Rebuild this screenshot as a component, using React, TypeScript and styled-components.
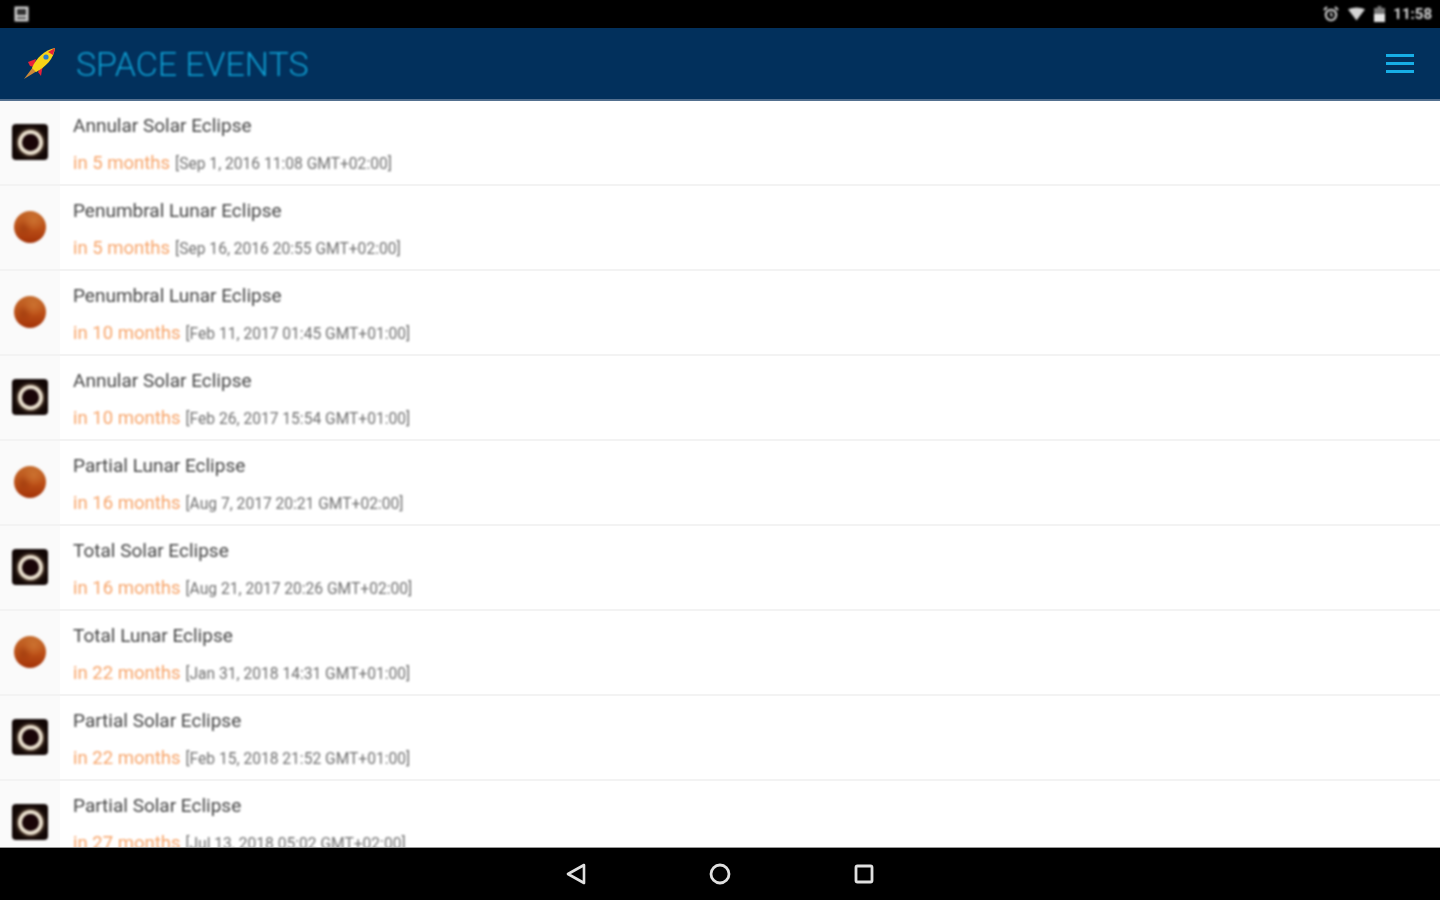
import React from "react";
import styled, { createGlobalStyle } from "styled-components";

const Global = createGlobalStyle`
  html, body { margin: 0; padding: 0; height: 100%; background: #fff; overflow: hidden; }
  body { font-family: "Roboto", "Liberation Sans", sans-serif; }
  #root { height: 100%; }
`;

const Page = styled.div`
  width: 1440px;
  height: 900px;
  display: flex;
  flex-direction: column;
  overflow: hidden;
`;
const StatusBar = styled.div`
  height: 28px;
  flex: none;
  background: #000;
  display: flex;
  align-items: center;
  justify-content: space-between;
  padding: 0 8px 0 14px;
`;
const StatusLeft = styled.div`
  filter: blur(0.8px);
`;
const StatusRight = styled.div`
  display: flex;
  align-items: center;
  filter: blur(0.8px);
`;
const Clock = styled.span`
  color: #d8d8d8;
  font-size: 15px;
  font-weight: 700;
  margin-left: 8px;
`;
const Header = styled.header`
  height: 73px;
  flex: none;
  box-sizing: border-box;
  background: #02305c;
  border-bottom: 2px solid #54708f;
  display: flex;
  align-items: center;
  padding: 0 26px 0 22px;
`;
const Title = styled.h1`
  margin: 0 0 0 18px;
  flex: 1;
  color: #0f9ccf;
  font-size: 34px;
  line-height: 40px;
  font-weight: 300;
  letter-spacing: -0.05px;
  filter: blur(0.8px);
`;
const Menu = styled.div`
  width: 28px;
  display: flex;
  flex-direction: column;
  gap: 5px;
  filter: blur(0.5px);
`;
const MenuBar = styled.span`
  height: 3px;
  background: #17aee6;
`;
const List = styled.main`
  flex: 1;
  min-height: 0;
  overflow: hidden;
  background: #fff;
`;
const Row = styled.div`
  height: 85px;
  box-sizing: border-box;
  display: flex;
  border-bottom: 2px solid #f3f3f3;
`;
const IconCell = styled.div`
  width: 60px;
  flex: none;
  box-sizing: border-box;
  padding-bottom: 1px;
  background: #fafafa;
  display: flex;
  align-items: center;
  justify-content: center;
`;
const Body = styled.div`
  flex: 1;
  padding: 13px 0 0 13px;
  filter: blur(0.8px);
`;
const Name = styled.div`
  color: #444;
  font-size: 19px;
  line-height: 24px;
`;
const Meta = styled.div`
  margin-top: 14px;
  display: flex;
  align-items: baseline;
  gap: 5px;
  white-space: nowrap;
`;
const When = styled.span`
  color: #f7a469;
  font-size: 18.5px;
  line-height: 22px;
`;
const DateText = styled.span`
  color: #6f6f6f;
  font-size: 15.6px;
  line-height: 22px;
`;
const NavBar = styled.nav`
  height: 53px;
  flex: none;
  background: #000;
  border-top: 1px solid #999;
  box-sizing: border-box;
  display: flex;
  align-items: center;
  justify-content: center;
`;
const NavIcons = styled.div`
  display: flex;
  align-items: center;
  gap: 120px;
  filter: blur(0.7px);
`;
const NavSlot = styled.svg`
  width: 24px;
  height: 24px;
  display: block;
`;
const Glyph = styled.svg`
  display: block;
  flex: none;
`;
const SolarBox = styled.div`
  width: 36px;
  height: 36px;
  border-radius: 4px;
  background: #130806;
  display: flex;
  align-items: center;
  justify-content: center;
  filter: blur(0.8px);
`;
const SolarRing = styled.div`
  width: 25px;
  height: 25px;
  box-sizing: border-box;
  border-radius: 50%;
  background: #1a0508;
  border: 4px solid #e6dccb;
  box-shadow: 0 0 4px #a8886a;
`;
const Moon = styled.div`
  width: 32px;
  height: 32px;
  border-radius: 50%;
  background:
    radial-gradient(circle at 62% 30%, rgba(214, 130, 60, 0.55) 0, rgba(214, 130, 60, 0) 35%),
    radial-gradient(circle at 30% 55%, rgba(130, 40, 5, 0.35) 0, rgba(130, 40, 5, 0) 30%),
    linear-gradient(180deg, #c4692a 0%, #bb4f17 55%, #a33208 100%);
  filter: blur(0.8px);
`;

const events = [
  ["s", "Annular Solar Eclipse", "in 5 months", "[Sep 1, 2016 11:08 GMT+02:00]"],
  ["l", "Penumbral Lunar Eclipse", "in 5 months", "[Sep 16, 2016 20:55 GMT+02:00]"],
  ["l", "Penumbral Lunar Eclipse", "in 10 months", "[Feb 11, 2017 01:45 GMT+01:00]"],
  ["s", "Annular Solar Eclipse", "in 10 months", "[Feb 26, 2017 15:54 GMT+01:00]"],
  ["l", "Partial Lunar Eclipse", "in 16 months", "[Aug 7, 2017 20:21 GMT+02:00]"],
  ["s", "Total Solar Eclipse", "in 16 months", "[Aug 21, 2017 20:26 GMT+02:00]"],
  ["l", "Total Lunar Eclipse", "in 22 months", "[Jan 31, 2018 14:31 GMT+01:00]"],
  ["s", "Partial Solar Eclipse", "in 22 months", "[Feb 15, 2018 21:52 GMT+01:00]"],
  ["s", "Partial Solar Eclipse", "in 27 months", "[Jul 13, 2018 05:02 GMT+02:00]"],
];

const Rocket = () => (
  <Glyph width="36" height="36" viewBox="0 0 36 36" style={{ filter: "blur(0.6px)" }}>
    <path d="M2 33 L11 21 L15 25 Z" fill="#c9893a" />
    <path d="M6 16 L14 13 L12 21 L8 20 Z" fill="#e8203a" />
    <path d="M20 24 L22 17 L16 26 L19 30 Z" fill="#e8203a" />
    <path d="M10 22 C14 12 23 4 33 2 C32 12 24 21 14 26 Z" fill="#f7d417" />
    <path d="M26 6 L33 2 L31 9 Z" fill="#e8203a" />
    <circle cx="24" cy="11" r="2.6" fill="#2a7fd0" />
  </Glyph>
);

export default function App() {
  return (
    <>
      <Global />
      <Page>
        <StatusBar>
          <StatusLeft>
            <Glyph width="15" height="16" viewBox="0 0 15 16">
              <rect x="0.5" y="0.5" width="14" height="15" fill="#cfcfcf" />
              <rect x="3" y="3" width="9" height="6" fill="#333" />
              <rect x="3" y="11" width="9" height="2" fill="#555" />
            </Glyph>
          </StatusLeft>
          <StatusRight>
            <Glyph width="16" height="16" viewBox="0 0 16 16" fill="none" stroke="#d4d4d4">
              <circle cx="8" cy="9" r="5.2" strokeWidth="2" />
              <path d="M8 6v3.5h2" strokeWidth="1.4" />
              <path d="M1 4l3-3M15 4l-3-3" strokeWidth="2" />
            </Glyph>
            <Glyph width="17" height="14" viewBox="0 0 18 14" style={{ marginLeft: 9 }}>
              <path d="M0 2 Q9 -2 18 2 L9 14 Z" fill="#d4d4d4" />
            </Glyph>
            <Glyph width="11" height="16" viewBox="0 0 11 16" style={{ marginLeft: 9 }}>
              <rect x="3.5" y="0" width="4" height="2" fill="#777" />
              <rect x="0" y="2" width="11" height="14" fill="#777" />
              <rect x="0" y="8" width="11" height="8" fill="#e6e6e6" />
            </Glyph>
            <Clock>11:58</Clock>
          </StatusRight>
        </StatusBar>
        <Header>
          <Rocket />
          <Title>SPACE EVENTS</Title>
          <Menu>
            <MenuBar />
            <MenuBar />
            <MenuBar />
          </Menu>
        </Header>
        <List>
          {events.map(([kind, name, when, date], i) => (
            <Row key={i}>
              <IconCell>
                {kind === "s" ? (
                  <SolarBox>
                    <SolarRing />
                  </SolarBox>
                ) : (
                  <Moon />
                )}
              </IconCell>
              <Body>
                <Name>{name}</Name>
                <Meta>
                  <When>{when}</When>
                  <DateText>{date}</DateText>
                </Meta>
              </Body>
            </Row>
          ))}
        </List>
        <NavBar>
          <NavIcons>
            <NavSlot viewBox="0 0 24 24" fill="none" stroke="#e0e0e0" strokeWidth="2.6">
              <path d="M20 3 L4 12 L20 21 Z" strokeLinejoin="round" />
            </NavSlot>
            <NavSlot viewBox="0 0 24 24" fill="none" stroke="#e0e0e0" strokeWidth="2.8">
              <circle cx="12" cy="12" r="9" />
            </NavSlot>
            <NavSlot viewBox="0 0 24 24" fill="none" stroke="#e0e0e0" strokeWidth="2.8">
              <rect x="4" y="4" width="16" height="16" rx="1.5" />
            </NavSlot>
          </NavIcons>
        </NavBar>
      </Page>
    </>
  );
}
